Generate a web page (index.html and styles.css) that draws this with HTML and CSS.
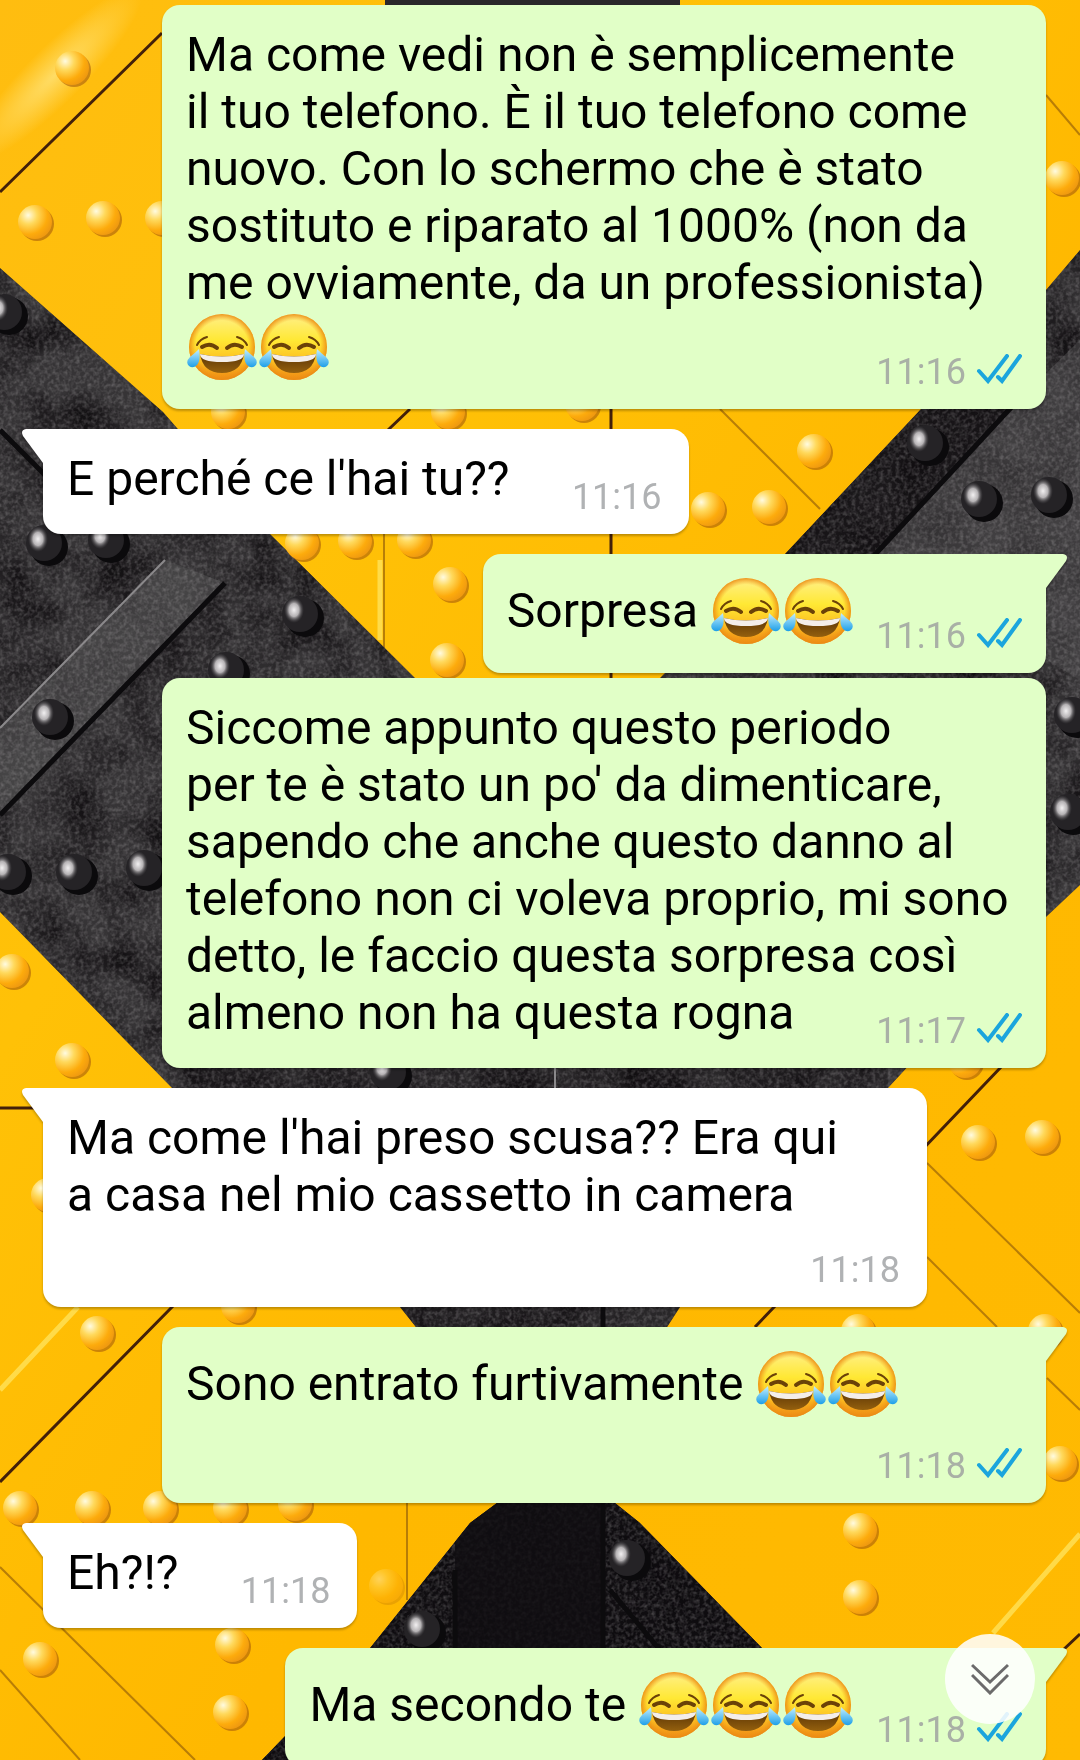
FILE: index.html
```html
<!DOCTYPE html>
<html lang="it">
<head>
<meta charset="UTF-8" />
<meta name="viewport" content="width=device-width, initial-scale=1" />
<title>Chat</title>
<link rel="stylesheet" href="styles.css">
</head>
<body>

<!-- Simboli riutilizzati -->
<svg class="defs" width="0" height="0" aria-hidden="true">
  <defs>
    <linearGradient id="face" x1="0" y1="0" x2="0" y2="1">
      <stop offset="0" stop-color="#fff08a" />
      <stop offset="0.4" stop-color="#ffe834" />
      <stop offset="0.7" stop-color="#fdc022" />
      <stop offset="1" stop-color="#ee8a12" />
    </linearGradient>
    <radialGradient id="edge" cx="0.5" cy="0.5" r="0.5">
      <stop offset="0.8" stop-color="#f39a1a" stop-opacity="0" />
      <stop offset="1" stop-color="#ea8a14" stop-opacity="0.9" />
    </radialGradient>
    <linearGradient id="mouth" x1="0" y1="0" x2="0" y2="1">
      <stop offset="0" stop-color="#5c3505" />
      <stop offset="1" stop-color="#94600e" />
    </linearGradient>
    <linearGradient id="tear" x1="0" y1="0" x2="0" y2="1">
      <stop offset="0" stop-color="#c4efff" />
      <stop offset="1" stop-color="#1d9fe8" />
    </linearGradient>
    <symbol id="joy" viewBox="0 0 72 71">
      <circle cx="36" cy="36" r="33" fill="url(#face)" />
      <circle cx="36" cy="36" r="33" fill="url(#edge)" />
      <g fill="none" stroke="#6b4208" stroke-linecap="round">
        <path stroke-width="2" d="M11 34Q14 28 21 26M61 34Q58 28 51 26" />
        <path stroke-width="4" d="M16 36Q24 31 31 37M56 36Q48 31 41 37" />
      </g>
      <path fill="url(#mouth)" d="M14 43Q36 48 58 43Q55 62 36 62Q17 62 14 43Z" />
      <path fill="#f4eeea" d="M14 43Q36 48 58 43Q58 51 36 51Q14 51 14 43Z" />
      <path fill="url(#tear)" d="M13 38Q15 50 11 54Q7 58 3 55Q-1 51 4 46Q9 42 13 38ZM59 38Q57 50 61 54Q65 58 69 55Q73 51 68 46Q63 42 59 38Z" />
    </symbol>
    <symbol id="read" viewBox="0 0 46 30">
      <path fill="none" stroke="#1ba5dd" stroke-width="4" stroke-linecap="round" d="M3 17L12 27L31 2M22 23L26 27L44 2" />
    </symbol>
  </defs>
</svg>

<main class="chat">
  <!-- Sfondo: lamiera gialla e nera -->
  <svg class="wallpaper" viewBox="0 0 1080 1760" preserveAspectRatio="xMidYMid slice" aria-hidden="true">
    <defs>
      <linearGradient id="paint" x1="0" y1="0" x2="1" y2="1">
        <stop offset="0" stop-color="#ffbd10" />
        <stop offset="0.3" stop-color="#ffc107" />
        <stop offset="0.6" stop-color="#ffb800" />
        <stop offset="1" stop-color="#ffba02" />
      </linearGradient>
      <radialGradient id="knob" cx="0.3" cy="0.3" r="0.75">
        <stop offset="0" stop-color="#fffbe0" />
        <stop offset="0.35" stop-color="#ffd95c" />
        <stop offset="0.75" stop-color="#fdab0c" />
        <stop offset="1" stop-color="#f09a10" />
      </radialGradient>
      <radialGradient id="glint">
        <stop offset="0" stop-color="#f2f0f1" />
        <stop offset="0.5" stop-color="#b5b2b4" />
        <stop offset="1" stop-color="#4a484b" stop-opacity="0" />
      </radialGradient>
      <radialGradient id="streak">
        <stop offset="0" stop-color="#ffe98a" stop-opacity="0.7" />
        <stop offset="1" stop-color="#ffe98a" stop-opacity="0" />
      </radialGradient>
      <filter id="grain" x="0" y="0" width="1" height="1">
        <feTurbulence type="fractalNoise" baseFrequency="0.25" numOctaves="3" seed="4" />
        <feColorMatrix values="0 0 0 0 0.5  0 0 0 0 0.48  0 0 0 0 0.49  1.2 0 0 0 -0.45" />
        <feComposite in2="SourceGraphic" operator="in" />
      </filter>
      <filter id="wear" x="0" y="0" width="1" height="1" color-interpolation-filters="sRGB">
        <feTurbulence type="fractalNoise" baseFrequency="0.02" numOctaves="4" seed="9" />
        <feColorMatrix values="0 0 0 0 0.08  0 0 0 0 0.07  0 0 0 0 0.08  2.4 0 0 0 -0.9" />
        <feComposite in2="SourceGraphic" operator="in" />
      </filter>
      <path id="steel" d="M0 268L163 412L270 534L415 678L540 790L660 678L785 554L921 409L1046 290L1080 250V885L1046 917L888 1088L680 1307L620 1400L615 1503L640 1523L762 1648L870 1760H262L370 1648L470 1523L497 1503L490 1420L400 1307L172 1088L0 912Z" />
      <clipPath id="steel-area">
        <use href="#steel" />
      </clipPath>
      <g id="rivet">
        <circle cx="2" cy="2" r="17" fill="#a85c0a" opacity="0.6" />
        <circle r="17" fill="url(#knob)" />
      </g>
      <g id="stud">
        <circle cx="5" cy="4" r="19" fill="#0b0a0c" />
        <circle r="18" fill="#252326" />
        <ellipse cx="-6" cy="-4" rx="10" ry="13" fill="url(#glint)" />
      </g>
    </defs>

    <rect width="1080" height="1760" fill="url(#paint)" />
    <ellipse cx="55" cy="75" rx="120" ry="28" transform="rotate(-45 55 75)" fill="url(#streak)" />
    <g fill="none" stroke="#ffe25a" stroke-width="5" opacity="0.8">
      <path d="M0 1390L78 1307M993 1633L1080 1534M380 560V640" />
    </g>
    <g fill="none" stroke="#43200a" stroke-width="3">
      <path d="M0 192L162 33M611 409V680M388 430L410 409M0 1108H50M920 1152L1002 1066M0 1482L174 1305M755 1327L776 1305M1062 1651L1080 1634" />
    </g>
    <g fill="none" stroke="#9a6408" stroke-width="2" opacity="0.7">
      <path d="M720 409L820 509M384 534V650M927 1163L1080 1313M927 1257L997 1327M1047 1378L1080 1410M0 1567L195 1760M0 1670L80 1760M407 1503V1600M1046 95L1080 135" />
    </g>

    <path fill="#2a282b" d="M385 0H680V10H385Z" />
    <use href="#steel" fill="#363436" />
    <g clip-path="url(#steel-area)">
      <use href="#steel" filter="url(#wear)" />
      <path fill="#4a484a" opacity="0.8" d="M165 560L225 583L0 815V728Z" />
      <path fill="#4a484a" opacity="0.6" d="M1080 340L1010 409L875 554L1080 680Z" />
      <path fill="#0f0d10" opacity="0.7" d="M921 409H1010L875 554H785Z" />
      <path fill="#0c0a0d" opacity="0.9" d="M490 1480H620L640 1523L770 1648L880 1760H250L370 1648L470 1523Z" />
      <path fill="#0c0a0d" opacity="0.3" d="M172 1060H888V1330H400Z" />
      <use href="#steel" filter="url(#grain)" opacity="0.5" />
      <path fill="#100e11" opacity="0.8" d="M490 1480H605V1648H455V1540Z" />
    </g>
    <g fill="none" stroke="#0c0b0d" stroke-width="5">
      <path d="M225 583L0 815M1018 400L870 560M0 430L50 480M603 1300V1650M455 1570V1650M610 1590L660 1650" />
    </g>
    <g fill="none" stroke="#8b898b" stroke-width="2">
      <path d="M165 560L0 728M555 1068V1088" />
    </g>

    <g>
      <use href="#rivet" x="72" y="68" />
      <use href="#rivet" x="35" y="222" />
      <use href="#rivet" x="103" y="218" />
      <use href="#rivet" x="162" y="218" />
      <use href="#rivet" x="1062" y="178" />
      <use href="#rivet" x="228" y="412" />
      <use href="#rivet" x="448" y="412" />
      <use href="#rivet" x="582" y="404" />
      <use href="#rivet" x="814" y="451" />
      <use href="#rivet" x="708" y="509" />
      <use href="#rivet" x="769" y="507" />
      <use href="#rivet" x="302" y="543" />
      <use href="#rivet" x="355" y="541" />
      <use href="#rivet" x="414" y="540" />
      <use href="#rivet" x="450" y="584" />
      <use href="#rivet" x="447" y="660" />
      <use href="#rivet" x="12" y="971" />
      <use href="#rivet" x="72" y="1060" />
      <use href="#rivet" x="965" y="1061" />
      <use href="#rivet" x="978" y="1142" />
      <use href="#rivet" x="1042" y="1137" />
      <use href="#rivet" x="48" y="1195" />
      <use href="#rivet" x="97" y="1333" />
      <use href="#rivet" x="238" y="1306" />
      <use href="#rivet" x="858" y="1331" />
      <use href="#rivet" x="1045" y="1331" />
      <use href="#rivet" x="1060" y="1463" />
      <use href="#rivet" x="20" y="1508" />
      <use href="#rivet" x="92" y="1508" />
      <use href="#rivet" x="160" y="1508" />
      <use href="#rivet" x="230" y="1508" />
      <use href="#rivet" x="295" y="1504" />
      <use href="#rivet" x="860" y="1530" />
      <use href="#rivet" x="860" y="1597" />
      <use href="#rivet" x="386" y="1586" opacity="0.4" />
      <use href="#rivet" x="40" y="1659" />
      <use href="#rivet" x="232" y="1645" />
      <use href="#rivet" x="230" y="1712" />
    </g>
    <g>
      <use href="#stud" x="4" y="312" />
      <use href="#stud" x="925" y="443" />
      <use href="#stud" x="979" y="499" />
      <use href="#stud" x="1049" y="495" />
      <use href="#stud" x="44" y="543" />
      <use href="#stud" x="106" y="540" />
      <use href="#stud" x="300" y="614" />
      <use href="#stud" x="226" y="670" />
      <use href="#stud" x="50" y="717" />
      <use href="#stud" x="8" y="872" />
      <use href="#stud" x="74" y="872" />
      <use href="#stud" x="144" y="868" />
      <use href="#stud" x="1072" y="715" />
      <use href="#stud" x="1068" y="812" />
      <use href="#stud" x="388" y="1072" />
      <use href="#stud" x="627" y="1558" />
      <use href="#stud" x="422" y="1629" />
    </g>
  </svg>

  <ul class="messages">
    <li class="bubble out wide">
      <p class="text">Ma come vedi non è semplicemente<br>il tuo telefono. È il tuo telefono come<br>nuovo. Con lo schermo che è stato<br>sostituto e riparato al 1000% (non da<br>me ovviamente, da un professionista)<br><svg class="emoji" role="img" aria-label="😂"><use href="#joy" /></svg><svg class="emoji" role="img" aria-label="😂"><use href="#joy" /></svg><span class="spacer"></span></p>
      <div class="meta"><time>11:16</time><svg class="ticks" role="img" aria-label="Letto"><use href="#read" /></svg></div>
    </li>

    <li class="bubble in first">
      <p class="text">E perché ce l'hai tu??<span class="spacer"></span></p>
      <div class="meta"><time>11:16</time></div>
    </li>

    <li class="bubble out first">
      <p class="text">Sorpresa <svg class="emoji" role="img" aria-label="😂"><use href="#joy" /></svg><svg class="emoji" role="img" aria-label="😂"><use href="#joy" /></svg><span class="spacer"></span></p>
      <div class="meta"><time>11:16</time><svg class="ticks" role="img" aria-label="Letto"><use href="#read" /></svg></div>
    </li>

    <li class="bubble out wide">
      <p class="text">Siccome appunto questo periodo<br>per te è stato un po' da dimenticare,<br>sapendo che anche questo danno al<br>telefono non ci voleva proprio, mi sono<br>detto, le faccio questa sorpresa così<br>almeno non ha questa rogna<span class="spacer"></span></p>
      <div class="meta"><time>11:17</time><svg class="ticks" role="img" aria-label="Letto"><use href="#read" /></svg></div>
    </li>

    <li class="bubble in first wide">
      <p class="text">Ma come l'hai preso scusa?? Era qui<br>a casa nel mio cassetto in camera<span class="spacer"></span></p>
      <div class="meta"><time>11:18</time></div>
    </li>

    <li class="bubble out first wide">
      <p class="text">Sono entrato furtivamente <svg class="emoji" role="img" aria-label="😂"><use href="#joy" /></svg><svg class="emoji" role="img" aria-label="😂"><use href="#joy" /></svg><span class="spacer"></span></p>
      <div class="meta"><time>11:18</time><svg class="ticks" role="img" aria-label="Letto"><use href="#read" /></svg></div>
    </li>

    <li class="bubble in first">
      <p class="text">Eh?!?<span class="spacer"></span></p>
      <div class="meta"><time>11:18</time></div>
    </li>

    <li class="bubble out first">
      <p class="text">Ma secondo te <svg class="emoji" role="img" aria-label="😂"><use href="#joy" /></svg><svg class="emoji" role="img" aria-label="😂"><use href="#joy" /></svg><svg class="emoji" role="img" aria-label="😂"><use href="#joy" /></svg><span class="spacer"></span></p>
      <div class="meta"><time>11:18</time><svg class="ticks" role="img" aria-label="Letto"><use href="#read" /></svg></div>
    </li>
  </ul>

  <button class="scroll-down" type="button" aria-label="Vai in fondo">
    <svg width="38" height="32" viewBox="0 0 38 32" fill="none" stroke="#6b6b6b" stroke-width="3">
      <path d="M1 2L19 19L37 2M1 12L19 30L37 12" />
    </svg>
  </button>
</main>

</body>
</html>
```
FILE: styles.css
```css
* {
  box-sizing: border-box;
}
body {
  margin: 0;
  font-family: Roboto, sans-serif;
  color: #000;
  background: #ffbc05;
}
.defs {
  position: absolute;
}
.chat {
  position: relative;
  height: 100vh;
  overflow: hidden;
}
.wallpaper {
  position: absolute;
  top: 0;
  left: 0;
  width: 100%;
  height: 100%;
}

/* Messaggi */
.messages {
  position: relative;
  display: flex;
  flex-direction: column;
  gap: 5px;
  list-style: none;
  margin: 0;
  padding: 5px 34px 0 43px;
}
.bubble {
  position: relative;
  max-width: calc(100% - 119px);
  padding: 21px 24px 16px;
  border-radius: 18px;
  filter: drop-shadow(0 2px 1px rgba(0, 0, 0, 0.25));
}
.bubble.wide {
  width: 100%;
}
.bubble.first {
  margin-top: 15px;
}
.out {
  align-self: flex-end;
  background: #e1ffc7;
}
.in {
  align-self: flex-start;
  background: #fff;
}

/* Codine */
.first::before {
  content: "";
  position: absolute;
  top: 0;
  width: 22px;
  height: 34px;
  background: inherit;
}
.out.first {
  border-top-right-radius: 0;
}
.out.first::before {
  left: 100%;
  margin-left: -1px;
  clip-path: path("M0 0H18Q24 1 21 7L1 34H0Z");
}
.in.first {
  border-top-left-radius: 0;
}
.in.first::before {
  right: 100%;
  margin-right: -1px;
  clip-path: path("M22 0H4Q-2 1 1 7L21 34H22Z");
}

.text {
  margin: 0;
  font-size: 48px;
  line-height: 57px;
}
.emoji {
  width: 72px;
  height: 71px;
  vertical-align: -19px;
}
.spacer {
  display: inline-block;
  width: 155px;
}
.out .spacer {
  width: 168px;
}
.meta {
  display: flex;
  justify-content: flex-end;
  align-items: baseline;
  gap: 10px;
  margin-top: -30px;
  font-size: 36px;
  line-height: 41px;
  color: #a9b0a6;
}
.in .meta {
  padding-right: 3px;
  color: #b0b2b4;
}
.ticks {
  width: 46px;
  height: 30px;
}

.scroll-down {
  position: absolute;
  right: 45px;
  bottom: 36px;
  display: flex;
  justify-content: center;
  align-items: center;
  width: 90px;
  height: 90px;
  padding: 0;
  border: none;
  border-radius: 50%;
  background: rgba(255, 255, 255, 0.87);
  cursor: pointer;
}
```
